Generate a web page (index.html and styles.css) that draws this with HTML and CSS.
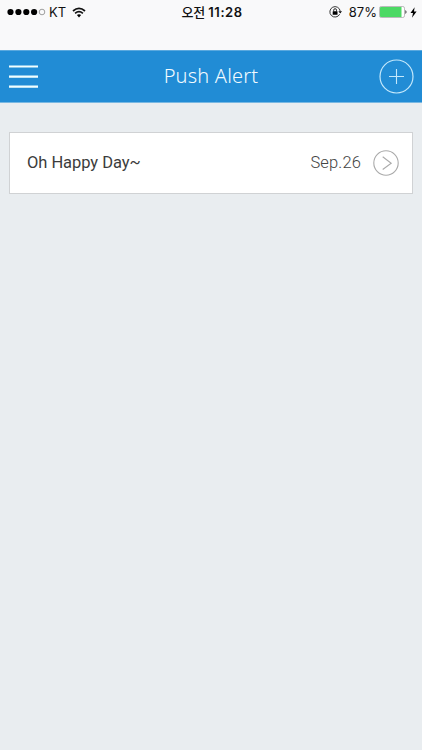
FILE: index.html
```html
<!DOCTYPE html>
<html lang="ko">
<head>
<meta charset="utf-8">
<title>Push Alert</title>
<link rel="stylesheet" href="styles.css">
</head>
<body>
<div class="status">
  <div class="status-left">
    <svg class="signal" width="39" height="8" viewBox="0 0 39 8"><circle cx="3.5" cy="4" r="3.1"/><circle cx="11.4" cy="4" r="3.1"/><circle cx="19.3" cy="4" r="3.1"/><circle cx="27.1" cy="4" r="3.1"/><circle cx="35" cy="4" r="2.8" fill="none" stroke="#777" stroke-width=".7"/></svg>
    <span class="carrier">KT</span>
    <svg class="wifi" width="14" height="11" viewBox="0 0 14 11"><path d="M1 4Q7-1.4 13 4M3.1 6.3Q7 2.9 10.9 6.3" fill="none" stroke="#111" stroke-width="1.7"/><path d="M4.9 8.1Q7 6.5 9.1 8.1L7 10.5Z"/></svg>
  </div>
  <div class="time"><span class="meridiem">오전</span><span class="clock">11:28</span></div>
  <div class="status-right">
    <svg class="lock" width="13" height="12" viewBox="0 0 13 12"><path d="M10.7 8.2A5.2 5.2 0 1 1 11.2 5" fill="none" stroke="#222" stroke-width=".9"/><path d="M9.4 5.3H13L11.2 7.6Z"/><rect x="3.7" y="5.2" width="4.8" height="3.6" rx=".4"/><path d="M4.7 5.5V4.2a1.4 1.5 0 0 1 2.8 0V5.5" fill="none" stroke="#111" stroke-width=".9"/></svg>
    <span class="percent">87%</span>
    <svg class="battery" width="28" height="12" viewBox="0 0 28 12"><rect x=".5" y=".5" width="25" height="11" rx="1.7" fill="#fff" stroke="#aaa" stroke-width=".8"/><path d="M1.8 1H22.5V11H1.8A1 1 0 0 1 1 10V2A1 1 0 0 1 1.8 1Z" fill="#4cd964"/><path d="M26.5 4Q28.4 6 26.5 8Z"/></svg>
    <svg class="bolt" width="7" height="11" viewBox="0 0 7 11"><path d="M4.6.3L.5 6H3L2 10.7L6.6 4.6H4Z"/></svg>
  </div>
</div>
<header class="bar">
  <svg width="30" height="24" viewBox="0 0 30 24"><path d="M1 1.5H30M1 11.6H30M1 21.7H30" stroke="#f2ffff" stroke-width="2.2"/></svg>
  <h1 class="title">Push Alert</h1>
  <svg width="35" height="35" viewBox="0 0 35 35"><path d="M17.5 10V25M10 17.5H25" stroke="#c3e8fb" stroke-width="1.1"/><circle cx="17.5" cy="17.5" r="16.5" fill="none" stroke="#c3e8fb" stroke-width="1.2"/></svg>
</header>
<main class="list">
  <div class="item">
    <span class="name">Oh Happy Day~</span>
    <span class="date">Sep.26</span>
    <svg width="27" height="27" viewBox="0 0 27 27" fill="none" stroke="#aaa"><circle cx="13" cy="13" r="12.2" stroke-width="1.1"/><path d="M9.7 6.8L18.2 13.2L9.7 19.5" stroke-width="1.1"/></svg>
  </div>
</main>
</body>
</html>
```
FILE: styles.css
```css
* { box-sizing: border-box; }
body {
  margin: 0;
  height: 750px;
  overflow: hidden;
  background: #e9edf0;
  font-family: Roboto, "Noto Sans CJK KR", sans-serif;
}
svg { display: block; flex: none; }
.status {
  display: grid;
  grid-template-columns: 1fr auto 1fr;
  height: 50px;
  padding: 0 5px 0 7px;
  background: #f9f9fa;
  color: #111;
  font: 13px/24px Inter, "Noto Sans CJK KR", sans-serif;
}
.status-left, .status-right, .time { display: flex; align-items: center; height: 24px; }
.status-right { justify-content: flex-end; }
.carrier { margin-left: 3px; font-size: 13px; }
.wifi { margin-left: 6px; }
.time { font-weight: 600; gap: 3px; }
.meridiem { font-size: 13px; font-weight: 500; }
.clock { letter-spacing: .55px; }
.percent { margin: 0 2px 0 7px; }
.bolt { margin-left: 3px; }
.bar {
  display: flex;
  align-items: center;
  justify-content: space-between;
  height: 53px;
  padding: 0 8px;
  background: #218cd5;
  border-top: 1px solid #5aa9df;
  border-bottom: 1px solid #79b8e2;
}
.title {
  margin: 0 0 2px 5px;
  color: #f2fbff;
  font-family: "Noto Sans", sans-serif;
  font-size: 20px;
  font-weight: 300;
  line-height: 30px;
  letter-spacing: .2px;
}
.list { padding: 29px 9px; }
.item {
  display: flex;
  align-items: center;
  height: 62px;
  padding: 0 12px 0 17px;
  background: #fff;
  border: 1px solid #d0d2d4;
}
.name { flex: 1; margin-bottom: 2px; color: #3c3c3c; font-size: 16.5px; letter-spacing: -.05px; }
.date { margin: 0 12px 2px 0; color: #444; font-size: 16.5px; font-weight: 300; letter-spacing: .15px; }
```
